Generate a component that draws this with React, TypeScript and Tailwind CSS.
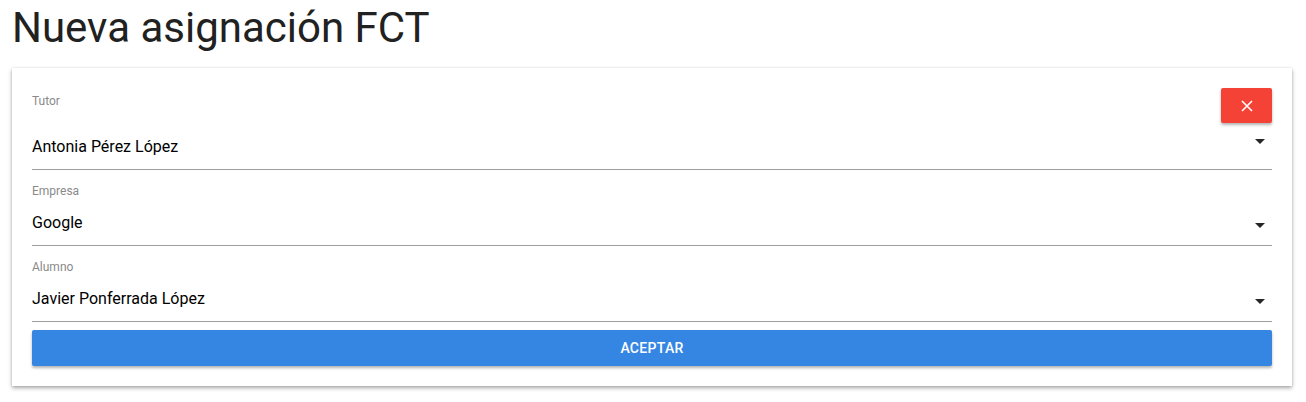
import React from "react";

const Caret = ({ className = "" }: { className?: string }) => (
  <svg width="10" height="5" viewBox="0 0 10 5" className={className}>
    <path d="M0 0 L10 0 L5 5 Z" fill="#262626" />
  </svg>
);

function Field({
  label,
  value,
  first,
}: {
  label: string;
  value: string;
  first?: boolean;
}) {
  return (
    <div className={first ? "pt-[6px]" : "pt-[14px]"}>
      <div className="text-[12px] leading-[14px] text-[#8a8a8a]">{label}</div>
      <div
        className={`relative border-b border-[#9e9e9e] ${
          first ? "h-[62px] pt-[27px]" : "h-[48px] pt-[13px]"
        }`}
      >
        <div className="text-[16px] leading-6 text-black">{value}</div>
        <Caret
          className={`absolute right-[7px] ${first ? "top-[31px]" : "top-[25px]"}`}
        />
      </div>
    </div>
  );
}

export default function App() {
  return (
    <div
      className="bg-white w-[1306px] h-[402px] pl-3 pr-[14px]"
      style={{ fontFamily: "Roboto, 'Liberation Sans', sans-serif" }}
    >
      <h1 className="text-[42px] leading-[48px] pt-[4px] text-[#212121] font-normal">
        Nueva asignación FCT
      </h1>
      <div className="relative mt-[16px] bg-white p-5 shadow-[0_2px_4px_rgba(0,0,0,0.35),0_0_1px_rgba(0,0,0,0.15)]">
        <button className="absolute right-5 top-5 w-[51px] h-[35px] rounded-[2px] bg-[#f44336] flex items-center justify-center shadow-[0_2px_3px_rgba(0,0,0,0.3)]">
          <svg width="12" height="12" viewBox="0 0 12 12">
            <path d="M1 1 L11 11 M11 1 L1 11" stroke="white" strokeWidth="1.6" />
          </svg>
        </button>
        <Field label="Tutor" value="Antonia Pérez López" first />
        <Field label="Empresa" value="Google" />
        <Field label="Alumno" value="Javier Ponferrada López" />
        <button className="mt-2 w-full h-[36px] rounded-[2px] bg-[#3586e3] text-white text-[14px] font-medium tracking-[0.3px] shadow-[0_2px_3px_rgba(0,0,0,0.3)]">
          ACEPTAR
        </button>
      </div>
    </div>
  );
}
